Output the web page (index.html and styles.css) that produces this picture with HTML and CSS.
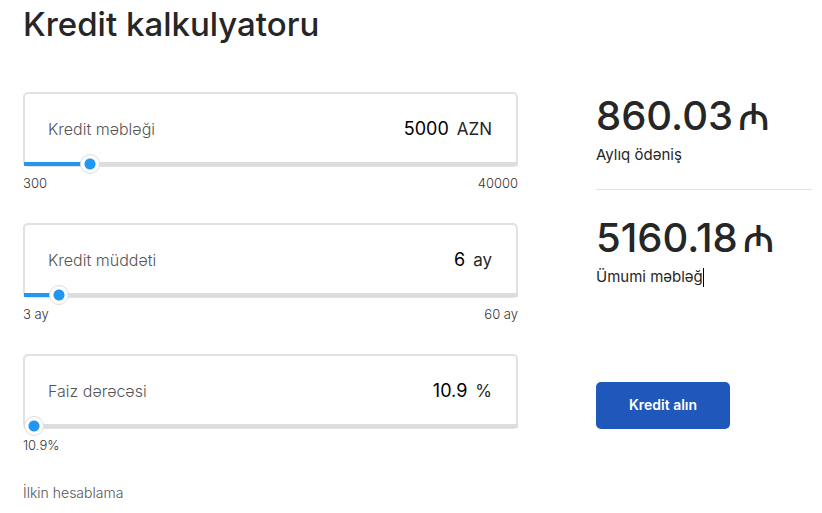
FILE: index.html
```html
<!DOCTYPE html>
<html lang="az">
<head>
<meta charset="utf-8">
<meta name="viewport" content="width=device-width, initial-scale=1">
<title>Kredit kalkulyatoru</title>
<link rel="stylesheet" href="styles.css">
</head>
<body>
<main class="page">
  <h1 class="title">Kredit kalkulyatoru</h1>
  <form class="calculator">
    <div class="fields">
      <div class="field">
        <div class="box">
          <label class="label" for="amount">Kredit məbləği</label>
          <input class="value" id="amount" type="text" inputmode="numeric" value="5000">
          <span class="unit">AZN</span>
        </div>
        <input class="slider" type="range" aria-label="Kredit məbləği" min="300" max="40000" step="100" value="5000" style="--fill: 11.84%">
        <div class="limits"><span>300</span><span>40000</span></div>
      </div>
      <div class="field">
        <div class="box">
          <label class="label" for="term">Kredit müddəti</label>
          <input class="value" id="term" type="text" inputmode="numeric" value="6">
          <span class="unit">ay</span>
        </div>
        <input class="slider" type="range" aria-label="Kredit müddəti" min="3" max="60" value="6" style="--fill: 5.26%">
        <div class="limits"><span>3 ay</span><span>60 ay</span></div>
      </div>
      <div class="field">
        <div class="box">
          <label class="label" for="rate">Faiz dərəcəsi</label>
          <input class="value" id="rate" type="text" inputmode="decimal" value="10.9">
          <span class="unit">%</span>
        </div>
        <input class="slider" type="range" aria-label="Faiz dərəcəsi" min="10.9" max="30" step="0.1" value="10.9" style="--fill: 0%">
        <div class="limits"><span>10.9%</span></div>
      </div>
      <p class="note">İlkin hesablama</p>
    </div>
    <div class="summary">
      <div class="result">
        <output class="sum">860.03 <span class="currency">₼</span></output>
        <p class="caption">Aylıq ödəniş</p>
      </div>
      <div class="result">
        <output class="sum">5160.18 <span class="currency">₼</span></output>
        <p class="caption">Ümumi məbləğ<span class="caret"></span></p>
      </div>
      <button class="submit" type="button">Kredit alın</button>
    </div>
  </form>
</main>
</body>
</html>
```
FILE: styles.css
```css
* { box-sizing: border-box; }

body {
  margin: 0;
  background: #fff;
  color: #262626;
  font-family: Inter, "Liberation Sans", sans-serif;
}

p { margin: 0; }

.page { padding: 0 10px 0 23px; }

.title {
  margin: 0 0 44px;
  font-size: 33px;
  font-weight: 500;
  line-height: 48px;
}

.calculator {
  display: grid;
  grid-template-columns: minmax(0, 495fr) minmax(0, 216fr);
  column-gap: 78px;
}

.field { height: 131px; }

.box {
  display: flex;
  align-items: center;
  gap: 8px;
  height: 75px;
  padding: 0 24px 2px 23px;
  border: 2px solid #e2e2e2;
  border-radius: 5px;
  font-size: 18px;
  line-height: 24px;
}

.label {
  color: #555;
  font-size: 16px;
  font-weight: 300;
}

.value {
  flex: 1;
  min-width: 0;
  padding: 0;
  border: 0;
  outline: 0;
  background: none;
  color: #000;
  font: inherit;
  text-align: right;
}

.unit { font-size: 17px; }

.slider {
  appearance: none;
  position: relative;
  display: block;
  width: calc(100% - 1px);
  height: 20px;
  margin: -13px 0 0 1px;
  background: none;
}

.slider::-webkit-slider-runnable-track {
  height: 4px;
  background: linear-gradient(#2196f3, #2196f3) 0 0 / var(--fill) 100% no-repeat #ddd;
}

.slider::-webkit-slider-thumb {
  appearance: none;
  width: 20px;
  height: 20px;
  margin-top: -8px;
  border: 1px solid #ddd;
  border-radius: 50%;
  background: radial-gradient(circle, #2196f3 5px, #fff 6px);
}

.limits {
  display: flex;
  justify-content: space-between;
  color: #333;
  font-size: 13px;
  font-weight: 300;
  line-height: 18px;
}

.note {
  margin-top: -2px;
  color: #555;
  font-size: 14px;
  font-weight: 300;
  line-height: 20px;
}

.result + .result {
  margin-top: 24px;
  padding-top: 24px;
  border-top: 1px solid #e2e2e2;
}

.sum {
  display: flex;
  align-items: baseline;
  gap: 5px;
  height: 48px;
  font-size: 40px;
  font-weight: 500;
  line-height: 46px;
  white-space: nowrap;
}

.currency {
  font-family: "Noto Sans", "Open Sans", sans-serif;
  font-size: 38px;
}

.caption {
  display: flex;
  align-items: center;
  height: 20px;
  margin-top: 5px;
  font-size: 15px;
  line-height: 20px;
}

.caret {
  width: 1px;
  height: 19px;
  background: #000;
}

.submit {
  width: 134px;
  height: 47px;
  margin-top: 95px;
  padding: 0 0 2px;
  border: 0;
  border-radius: 5px;
  background: #2057bb;
  color: #fff;
  font: 600 14px/20px Inter, "Liberation Sans", sans-serif;
}
```
